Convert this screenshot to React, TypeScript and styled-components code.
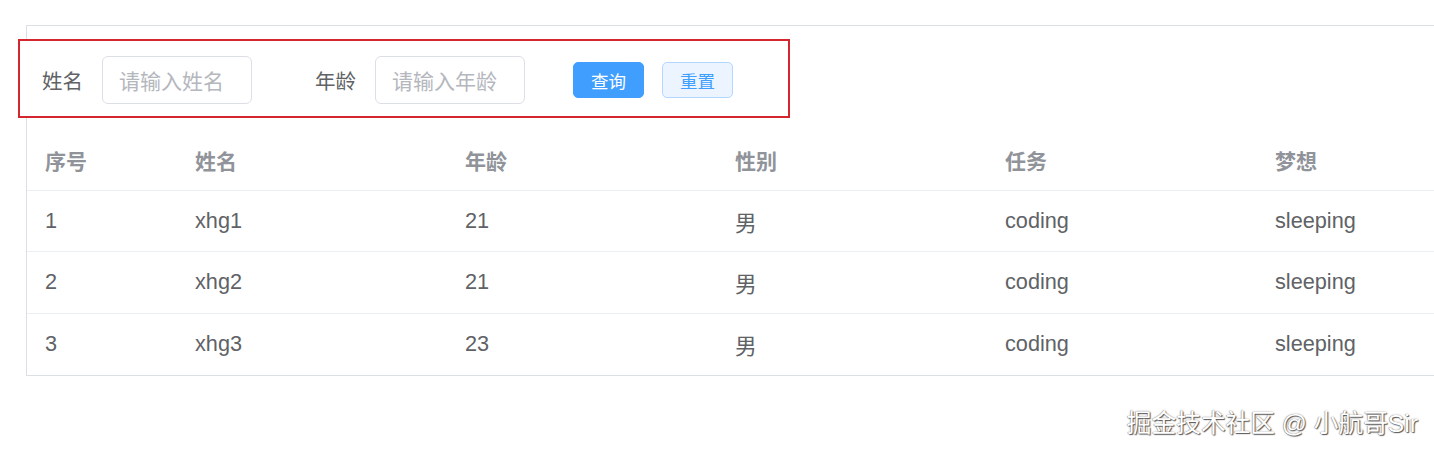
import React from "react";
import styled, { createGlobalStyle } from "styled-components";

const Global = createGlobalStyle`
  html, body { margin: 0; padding: 0; background: #fff; overflow: hidden; }
  body { font-family: "Liberation Sans", Arial, "Noto Sans CJK SC", sans-serif; }
  * { box-sizing: border-box; }
`;

const Page = styled.div`
  position: relative;
  width: 1434px;
  height: 454px;
  overflow: hidden;
  padding: 25px 0 0 26px;
`;

const Panel = styled.div`
  width: 1502px;
  border: 1px solid #dcdfe6;
  border-right: none;
  padding-top: 13px;
`;

const SearchForm = styled.div`
  display: flex;
  align-items: center;
  margin-left: -9px;
  width: 772px;
  height: 79px;
  border: 2px solid #d3262f;
  background: #fff;
  padding: 3px 0 0 22px;
  margin-bottom: 11px;
`;

const Field = styled.div<{ $gap: number }>`
  display: flex;
  align-items: center;
  gap: 19px;
  margin-right: ${(p) => p.$gap}px;
`;

const Label = styled.span`
  font-family: "Noto Sans CJK SC", sans-serif;
  font-size: 20.5px;
  color: #606266;
  line-height: 1;
`;

const Input = styled.input`
  width: 150px;
  height: 48px;
  border: 1px solid #dcdfe6;
  border-radius: 6px;
  padding: 0 16px;
  font-family: "Noto Sans CJK SC", sans-serif;
  font-size: 21px;
  color: #606266;
  outline: none;
  &::placeholder { color: #b4b7bd; }
`;

const Button = styled.button<{ $primary?: boolean }>`
  width: 71px;
  height: 36px;
  border-radius: 5px;
  font-family: "Noto Sans CJK SC", sans-serif;
  font-size: 17.5px;
  cursor: pointer;
  padding: 0;
  margin-right: 18px;
  border: 1px solid ${(p) => (p.$primary ? "#409eff" : "#b3d8ff")};
  background: ${(p) => (p.$primary ? "#409eff" : "#ecf5ff")};
  color: ${(p) => (p.$primary ? "#fff" : "#409eff")};
`;

const Row = styled.div<{ $head?: boolean }>`
  display: grid;
  grid-template-columns: 150px repeat(5, 270px);
  height: ${(p) => (p.$head ? "62px" : "61.3px")};
  align-items: center;
  border-bottom: 1px solid #ebeef5;
  &:last-child { border-bottom: none; }
`;

const Cell = styled.div<{ $head?: boolean }>`
  padding-left: 18px;
  font-size: ${(p) => (p.$head ? "21px" : "21.7px")};
  font-weight: ${(p) => (p.$head ? 700 : 400)};
  color: ${(p) => (p.$head ? "#909399" : "#606266")};
  font-family: "Liberation Sans", Arial, "Noto Sans CJK SC", sans-serif;
`;

const Watermark = styled.div`
  position: absolute;
  right: 16px;
  top: 408px;
  font-family: "Liberation Sans", "Noto Sans CJK SC", sans-serif;
  font-size: 24.7px;
  line-height: 32px;
  color: #fff;
  text-shadow: 1px 1px 1px #555, -0.5px -0.5px 0.5px #999, 0 0 2px #999;
  white-space: nowrap;
`;

const headers = ["序号", "姓名", "年龄", "性别", "任务", "梦想"];
const rows = [
  ["1", "xhg1", "21", "男", "coding", "sleeping"],
  ["2", "xhg2", "21", "男", "coding", "sleeping"],
  ["3", "xhg3", "23", "男", "coding", "sleeping"],
];

export default function App() {
  return (
    <>
      <Global />
      <Page>
        <Panel>
          <SearchForm>
            <Field $gap={63}>
              <Label>姓名</Label>
              <Input placeholder="请输入姓名" />
            </Field>
            <Field $gap={48}>
              <Label>年龄</Label>
              <Input placeholder="请输入年龄" />
            </Field>
            <Button $primary>查询</Button>
            <Button>重置</Button>
          </SearchForm>
          <div>
            <Row $head>
              {headers.map((h) => (
                <Cell key={h} $head>
                  {h}
                </Cell>
              ))}
            </Row>
            {rows.map((r) => (
              <Row key={r[0]}>
                {r.map((c, i) => (
                  <Cell key={i}>{c}</Cell>
                ))}
              </Row>
            ))}
          </div>
        </Panel>
        <Watermark>掘金技术社区 @ 小航哥Sir</Watermark>
      </Page>
    </>
  );
}
